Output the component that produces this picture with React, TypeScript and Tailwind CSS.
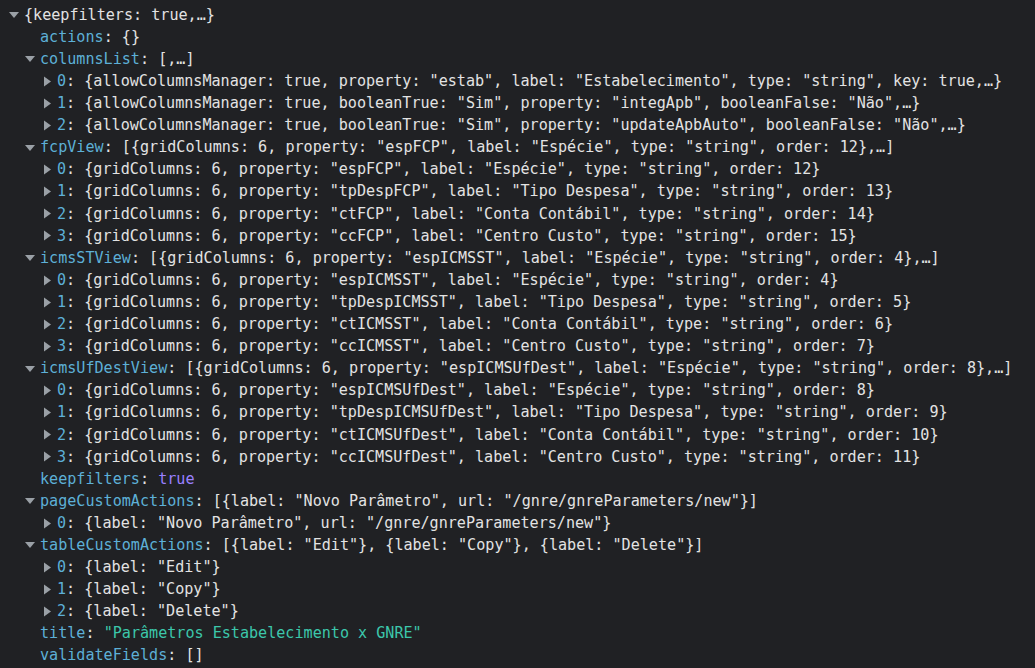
import React from "react"

type Row = {
  level: number
  arrow?: "down" | "right"
  name: string
  // preview text (white), or value with a colour
  preview?: string
  value?: string
  valueClass?: string
}

const rows: Row[] = [
  { level: 0, arrow: "down", name: "", preview: "{keepfilters: true,…}" },
  { level: 1, name: "actions", preview: "{}" },
  { level: 1, arrow: "down", name: "columnsList", preview: "[,…]" },
  { level: 2, arrow: "right", name: "0", preview: '{allowColumnsManager: true, property: "estab", label: "Estabelecimento", type: "string", key: true,…}' },
  { level: 2, arrow: "right", name: "1", preview: '{allowColumnsManager: true, booleanTrue: "Sim", property: "integApb", booleanFalse: "Não",…}' },
  { level: 2, arrow: "right", name: "2", preview: '{allowColumnsManager: true, booleanTrue: "Sim", property: "updateApbAuto", booleanFalse: "Não",…}' },
  { level: 1, arrow: "down", name: "fcpView", preview: '[{gridColumns: 6, property: "espFCP", label: "Espécie", type: "string", order: 12},…]' },
  { level: 2, arrow: "right", name: "0", preview: '{gridColumns: 6, property: "espFCP", label: "Espécie", type: "string", order: 12}' },
  { level: 2, arrow: "right", name: "1", preview: '{gridColumns: 6, property: "tpDespFCP", label: "Tipo Despesa", type: "string", order: 13}' },
  { level: 2, arrow: "right", name: "2", preview: '{gridColumns: 6, property: "ctFCP", label: "Conta Contábil", type: "string", order: 14}' },
  { level: 2, arrow: "right", name: "3", preview: '{gridColumns: 6, property: "ccFCP", label: "Centro Custo", type: "string", order: 15}' },
  { level: 1, arrow: "down", name: "icmsSTView", preview: '[{gridColumns: 6, property: "espICMSST", label: "Espécie", type: "string", order: 4},…]' },
  { level: 2, arrow: "right", name: "0", preview: '{gridColumns: 6, property: "espICMSST", label: "Espécie", type: "string", order: 4}' },
  { level: 2, arrow: "right", name: "1", preview: '{gridColumns: 6, property: "tpDespICMSST", label: "Tipo Despesa", type: "string", order: 5}' },
  { level: 2, arrow: "right", name: "2", preview: '{gridColumns: 6, property: "ctICMSST", label: "Conta Contábil", type: "string", order: 6}' },
  { level: 2, arrow: "right", name: "3", preview: '{gridColumns: 6, property: "ccICMSST", label: "Centro Custo", type: "string", order: 7}' },
  { level: 1, arrow: "down", name: "icmsUfDestView", preview: '[{gridColumns: 6, property: "espICMSUfDest", label: "Espécie", type: "string", order: 8},…]' },
  { level: 2, arrow: "right", name: "0", preview: '{gridColumns: 6, property: "espICMSUfDest", label: "Espécie", type: "string", order: 8}' },
  { level: 2, arrow: "right", name: "1", preview: '{gridColumns: 6, property: "tpDespICMSUfDest", label: "Tipo Despesa", type: "string", order: 9}' },
  { level: 2, arrow: "right", name: "2", preview: '{gridColumns: 6, property: "ctICMSUfDest", label: "Conta Contábil", type: "string", order: 10}' },
  { level: 2, arrow: "right", name: "3", preview: '{gridColumns: 6, property: "ccICMSUfDest", label: "Centro Custo", type: "string", order: 11}' },
  { level: 1, name: "keepfilters", value: "true", valueClass: "text-[#9980ff]" },
  { level: 1, arrow: "down", name: "pageCustomActions", preview: '[{label: "Novo Parâmetro", url: "/gnre/gnreParameters/new"}]' },
  { level: 2, arrow: "right", name: "0", preview: '{label: "Novo Parâmetro", url: "/gnre/gnreParameters/new"}' },
  { level: 1, arrow: "down", name: "tableCustomActions", preview: '[{label: "Edit"}, {label: "Copy"}, {label: "Delete"}]' },
  { level: 2, arrow: "right", name: "0", preview: '{label: "Edit"}' },
  { level: 2, arrow: "right", name: "1", preview: '{label: "Copy"}' },
  { level: 2, arrow: "right", name: "2", preview: '{label: "Delete"}' },
  { level: 1, name: "title", value: '"Parâmetros Estabelecimento x GNRE"', valueClass: "text-[#3cc7ab]" },
  { level: 1, name: "validateFields", preview: "[]" },
]

const indent = ["pl-[8px]", "pl-[24px]", "pl-[41px]"]

function Arrow({ dir }: { dir?: "down" | "right" }) {
  if (!dir) return <span className="w-[16px] shrink-0" />
  return (
    <span className="w-[16px] shrink-0 flex items-center">
      {dir === "down" ? (
        <svg width="11" height="8" viewBox="0 0 11 8" className="ml-[1px]">
          <path d="M0 1 L10 1 L5 7 Z" fill="#9aa0a6" />
        </svg>
      ) : (
        <svg width="8" height="11" viewBox="0 0 8 11" className="ml-[3px]">
          <path d="M0 0.5 L7 5.5 L0 10.5 Z" fill="#9aa0a6" />
        </svg>
      )}
    </span>
  )
}

export default function App() {
  return (
    <div
      className="w-[1035px] h-[668px] bg-[#202124] text-[#e3e3e3] pt-[4px] overflow-hidden"
      style={{ fontFamily: '"DejaVu Sans Mono", "Liberation Mono", monospace' }}
    >
      {rows.map((r, i) => (
        <div key={i} className={`flex items-center h-[22.1px] text-[15.1px] whitespace-pre ${indent[r.level]}`}>
          <Arrow dir={r.arrow} />
          {r.name && (
            <>
              <span className="text-[#5db0d7]">{r.name}</span>
              <span>: </span>
            </>
          )}
          {r.preview && <span>{r.preview}</span>}
          {r.value && <span className={r.valueClass}>{r.value}</span>}
        </div>
      ))}
    </div>
  )
}
